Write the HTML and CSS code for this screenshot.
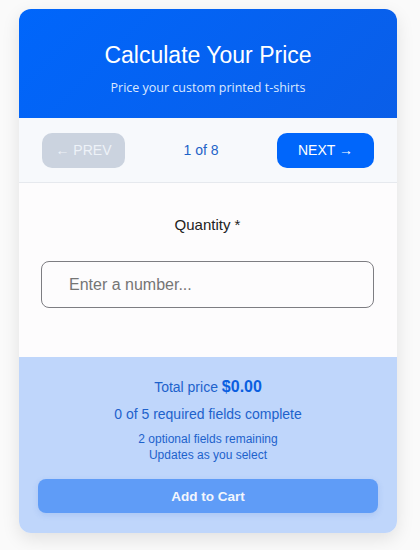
FILE: index.html
```html
<!DOCTYPE html>
<html>
<head>
<meta charset="utf-8">
<link rel="stylesheet" href="styles.css">
</head>
<body>
<div class="card">
  <header class="head">
    <h1 class="title">Calculate Your Price</h1>
    <p class="sub">Price your custom printed t-shirts</p>
  </header>
  <nav class="nav">
    <button class="btn prev">← PREV</button>
    <span class="step">1 of 8</span>
    <button class="btn next">NEXT →</button>
  </nav>
  <section class="body">
    <label class="label" for="q">Quantity *</label>
    <input id="q" class="input" type="text" placeholder="Enter a number...">
  </section>
  <footer class="foot">
    <div class="total">Total price <strong>$0.00</strong></div>
    <div class="req">0 of 5 required fields complete</div>
    <div class="opt">2 optional fields remaining<br>Updates as you select</div>
    <button class="cart">Add to Cart</button>
  </footer>
</div>
</body>
</html>
```
FILE: styles.css
```css
html, body { margin: 0; padding: 0; }
body {
  background: #fafafa;
  font-family: "Liberation Sans", Arial, sans-serif;
  padding: 9px 23px 18px 19px;
}
.card {
  width: 378px;
  border-radius: 12px;
  overflow: hidden;
  background: #fdfcfd;
  box-shadow: 0 6px 18px rgba(0,0,0,0.10);
}
.head {
  background: linear-gradient(135deg, #0066fb, #0a5ee8);
  color: #fff;
  text-align: center;
  height: 109px;
  box-sizing: border-box;
  padding-top: 32px;
}
.title {
  margin: 0;
  font-size: 23px;
  font-weight: 400;
  line-height: 29px;
}
.sub {
  margin: 9px 0 0;
  font-family: "Open Sans", "Noto Sans", sans-serif;
  font-size: 12.5px;
  line-height: 17px;
  color: #dbe8ff;
}
.nav {
  background: #f7f9fc;
  border-bottom: 1px solid #e6e9ee;
  height: 65px;
  box-sizing: border-box;
  display: flex;
  align-items: center;
  justify-content: space-between;
  padding: 0 23px;
}
.btn {
  border: none;
  border-radius: 10px;
  height: 35px;
  font-family: "Liberation Sans", Arial, sans-serif;
  font-size: 14px;
  color: #fff;
}
.prev { width: 83px; background: #cbd3df; color: #eef2f8; }
.next { width: 97px; background: #0066fb; }
.step { color: #1e63c8; font-size: 14px; }
.body {
  height: 174px;
  box-sizing: border-box;
  padding: 32px 23px 0 22px;
  display: flex;
  flex-direction: column;
  align-items: stretch;
}
.label {
  text-align: center;
  font-size: 15px;
  color: #222;
  line-height: 20px;
}
.input {
  margin-top: 26px;
  height: 47px;
  box-sizing: border-box;
  border: 1px solid #7d7d82;
  border-radius: 8px;
  padding: 0 27px;
  font-family: "Liberation Sans", Arial, sans-serif;
  font-size: 16px;
  background: #fdfcfd;
}
.input::placeholder { color: #757575; }
.foot {
  background: #bfd6fb;
  padding: 20px 19px 20px;
  text-align: center;
  color: #1d62cc;
}
.total { font-size: 14px; line-height: 20px; }
.total strong { color: #0b5fe0; font-size: 16px; }
.req { font-size: 14px; margin-top: 8px; line-height: 18px; }
.opt { font-size: 12px; margin-top: 8px; line-height: 16px; }
.cart {
  display: block;
  width: 100%;
  margin-top: 16px;
  height: 34px;
  border: none;
  border-radius: 8px;
  background: #5f9cf7;
  color: #f2f6fd;
  font-family: "Liberation Sans", Arial, sans-serif;
  font-weight: 700;
  font-size: 13.5px;
  box-shadow: 0 2px 6px rgba(40,100,200,0.15);
}
```
